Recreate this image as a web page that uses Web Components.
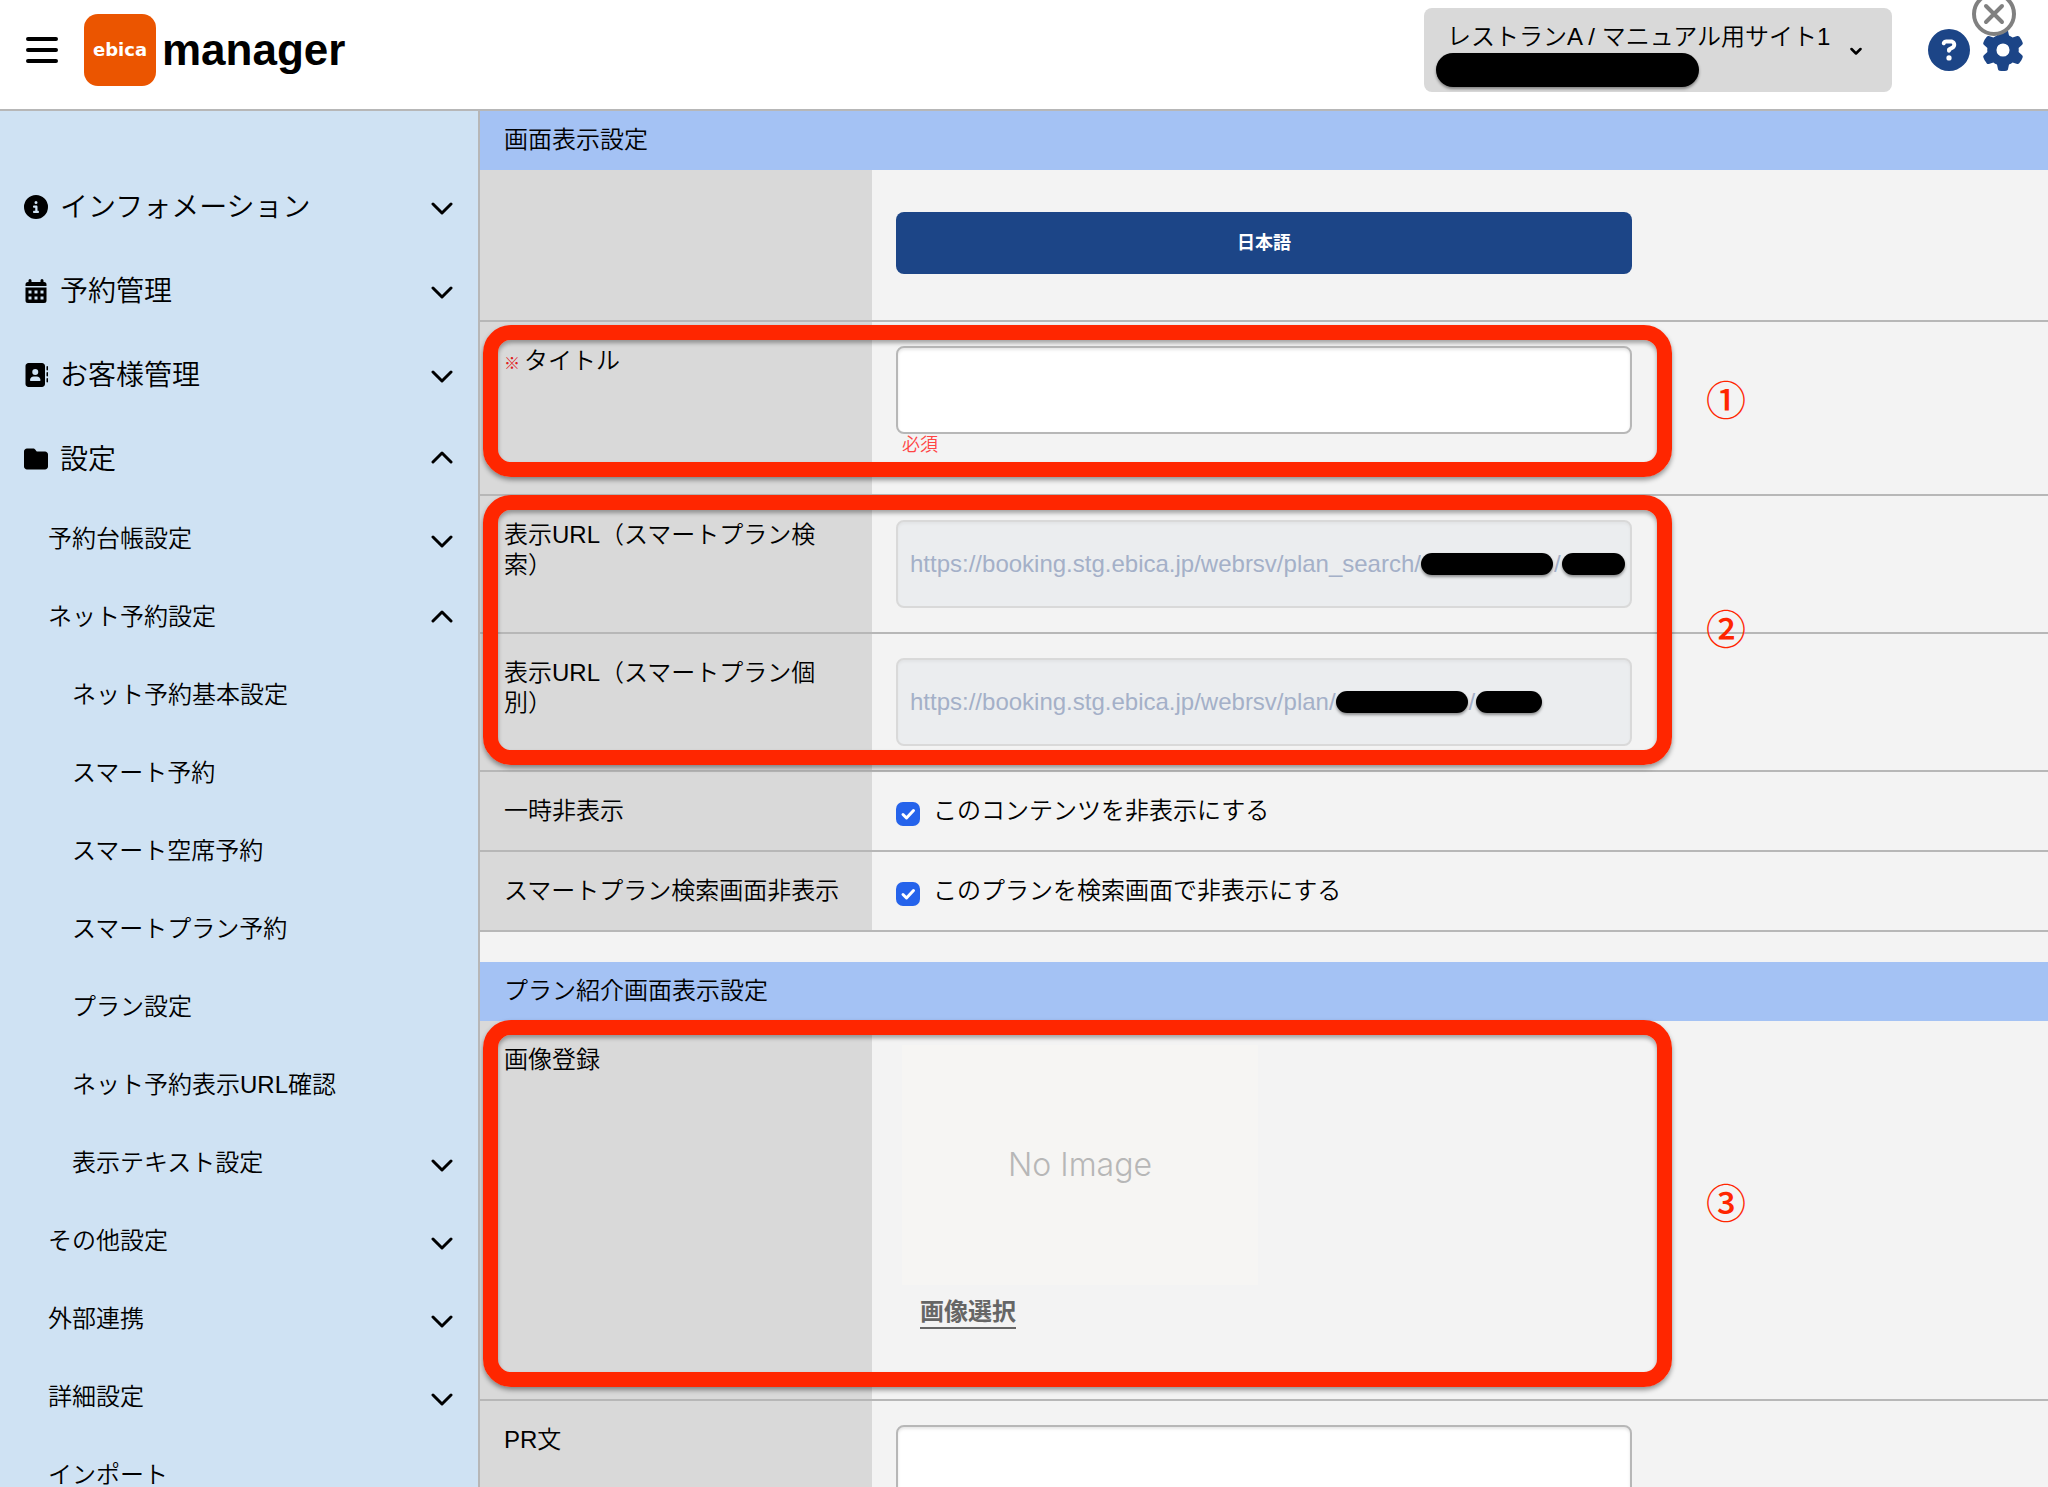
<!DOCTYPE html>
<html lang="ja">
<head>
<meta charset="utf-8">
<title>ebica manager</title>
<style>
  body {
    margin: 0;
    font: 350 24px/30px "Liberation Sans", "Noto Sans CJK JP", sans-serif;
    color: #000;
    background: #f3f3f3;
  }
</style>
</head>
<body>

<manager-app></manager-app>

<template id="app-template">
  <style>
    :host { display: flex; flex-direction: column; height: 100vh; overflow: hidden; }
    .body { display: flex; flex: 1; min-height: 0; }
    side-menu { flex: 0 0 478px; }
    settings-form { flex: 1; min-width: 0; }
  </style>
  <app-header></app-header>
  <div class="body">
    <side-menu></side-menu>
    <settings-form></settings-form>
  </div>
</template>

<template id="header-template">
  <style>
    :host {
      display: flex; align-items: flex-start; justify-content: space-between;
      height: 109px; border-bottom: 2px solid #b7b7b7; background: #fff;
    }
    button { border: 0; padding: 0; background: none; color: inherit; display: block; }
    .left { display: flex; align-items: center; padding: 14px 0 0 26px; }
    .brand { display: flex; align-items: center; gap: 6px; margin-left: 26px; color: #000; text-decoration: none; }
    .mark {
      display: flex; align-items: center; justify-content: center;
      width: 72px; height: 72px; border-radius: 14px; background: #eb5500;
      color: #fff; font: 700 18px/24px "DejaVu Sans", sans-serif;
    }
    .name { font-size: 44px; line-height: 72px; font-weight: 700; }
    .right { display: flex; align-items: center; padding: 8px 24px 0 0; }
    .site { position: relative; margin-right: 36px; }
    select {
      appearance: none; display: block; box-sizing: border-box; width: 468px; height: 84px;
      margin: 0; padding: 0 60px 26px 23px; border: 0; border-radius: 8px;
      background: #d9d9d9; color: #000; font: inherit;
    }
    .site app-icon { position: absolute; right: 30px; top: 37px; pointer-events: none; }
    .site black-pill { position: absolute; left: 12px; top: 45px; }
    .tools { display: flex; gap: 12px; color: #1c4587; }
    .close { position: absolute; top: -8px; right: 32px; color: #808080; }
  </style>
  <div class="left">
    <button aria-label="メニュー"><app-icon name="bars" style="--w:32px;--h:28px"></app-icon></button>
    <a class="brand" href="#"><span class="mark">ebica</span><span class="name">manager</span></a>
  </div>
  <div class="right">
    <div class="site">
      <select aria-label="サイト"><option>レストランA / マニュアル用サイト1</option></select>
      <black-pill style="--w:263px;--h:34px"></black-pill>
      <app-icon name="small-down" style="--w:12px;--h:12px"></app-icon>
    </div>
    <div class="tools">
      <button aria-label="ヘルプ"><app-icon name="help" style="--w:42px;--h:42px"></app-icon></button>
      <button aria-label="設定"><app-icon name="gear" style="--w:42px;--h:42px"></app-icon></button>
    </div>
  </div>
  <button class="close" aria-label="閉じる"><app-icon name="close" style="--w:44px;--h:44px"></app-icon></button>
</template>

<template id="menu-template">
  <style>
    :host {
      display: block; padding-top: 54px; overflow: hidden;
      background: #cfe2f3; border-right: 2px solid #b7b7b7;
    }
    nav { display: flex; flex-direction: column; }
  </style>
  <nav>
    <menu-item level="1" icon="info" arrow="down">インフォメーション</menu-item>
    <menu-item level="1" icon="calendar" arrow="down">予約管理</menu-item>
    <menu-item level="1" icon="book" arrow="down">お客様管理</menu-item>
    <menu-item level="1" icon="folder" arrow="up">設定</menu-item>
    <menu-item level="2" arrow="down">予約台帳設定</menu-item>
    <menu-item level="2" arrow="up">ネット予約設定</menu-item>
    <menu-item level="3">ネット予約基本設定</menu-item>
    <menu-item level="3">スマート予約</menu-item>
    <menu-item level="3">スマート空席予約</menu-item>
    <menu-item level="3">スマートプラン予約</menu-item>
    <menu-item level="3">プラン設定</menu-item>
    <menu-item level="3">ネット予約表示URL確認</menu-item>
    <menu-item level="3" arrow="down">表示テキスト設定</menu-item>
    <menu-item level="2" arrow="down">その他設定</menu-item>
    <menu-item level="2" arrow="down">外部連携</menu-item>
    <menu-item level="2" arrow="down">詳細設定</menu-item>
    <menu-item level="2">インポート</menu-item>
  </nav>
</template>

<template id="form-template">
  <style>
    :host { display: block; overflow: hidden; background: #f3f3f3; }
    form { margin: 0; }
    h2 {
      margin: 0; padding: 14px 24px 15px; background: #a4c2f4;
      font-size: 24px; line-height: 30px; font-weight: inherit;
    }
    h2.next { margin-top: 30px; }
    .group { position: relative; }
    .need { margin-right: 4px; color: #e02020; font-size: 16px; }
    .lang {
      display: block; width: 100%; height: 62px; margin: 18px 0 22px; border: 0; border-radius: 8px;
      background: #1c4587; color: #fff; font: 700 18px/24px "Liberation Sans", "Noto Sans CJK JP", sans-serif;
    }
    .field {
      display: flex; align-items: center; box-sizing: border-box; width: 100%; height: 88px; margin: 0;
      padding: 0 12px; border: 2px solid #b7b7b7; border-radius: 8px; background: #fff;
      box-shadow: inset 0 2px 3px #0000001a; font: inherit; color: #000; resize: none;
    }
    textarea.field { height: 180px; }
    .url {
      padding-right: 0; border-color: #d9d9d9; background: #ebedef; color: #a4b0c8;
      white-space: nowrap; box-shadow: inset 0 2px 3px #0000000a;
    }
    .url input {
      field-sizing: content; flex: none; padding: 0; border: 0; background: none;
      font: 400 24px/30px "Liberation Sans", sans-serif; color: inherit;
    }
    .url span { padding: 0 1px; font-weight: 400; }
    .error { margin: 0 0 14px; padding: 0 6px; line-height: 22px; font-size: 18px; color: #f44; }
    .check { display: flex; align-items: flex-end; gap: 13px; }
    .check input {
      appearance: none; width: 24px; height: 24px; margin: 0; border-radius: 7px; background: #2563eb;
    }
    .check input:checked {
      background: #2563eb url("data:image/svg+xml,%3Csvg xmlns='http://www.w3.org/2000/svg' viewBox='0 0 24 24'%3E%3Cpath d='M7 12.5l3.500 3.500 7-7.500' fill='none' stroke='white' stroke-width='3' stroke-linecap='round' stroke-linejoin='round'/%3E%3C/svg%3E");
    }
    .image {
      display: flex; align-items: center; justify-content: center;
      width: 356px; height: 240px; margin-left: 6px; background: #f6f5f3;
      color: #b7b7b7; font: 300 32px/40px Inter, Roboto, sans-serif;
    }
    .pick {
      display: inline-block; margin: 12px 24px 22px; border-bottom: 2px solid #666;
      color: #666; font-weight: 700; line-height: 30px; text-decoration: none;
    }
    .last { padding-bottom: 24px; }
  </style>
  <form>
    <h2>画面表示設定</h2>
    <setting-row>
      <button type="button" class="lang">日本語</button>
    </setting-row>
    <div class="group">
      <setting-row>
        <label slot="label" for="title"><span class="need">※</span>タイトル</label>
        <input id="title" class="field" type="text">
        <p class="error">必須</p>
      </setting-row>
      <call-out style="top:3px;bottom:19px">①</call-out>
    </div>
    <div class="group">
      <setting-row>
        <label slot="label" for="url-search">表示URL（スマートプラン検索）</label>
        <div class="field url">
          <input id="url-search" disabled value="https://booking.stg.ebica.jp/webrsv/plan_search/">
          <black-pill style="--w:132px;--h:22px"></black-pill><span>/</span>
          <black-pill style="--w:63px;--h:22px"></black-pill>
        </div>
      </setting-row>
      <setting-row>
        <label slot="label" for="url-plan">表示URL（スマートプラン個別）</label>
        <div class="field url">
          <input id="url-plan" disabled value="https://booking.stg.ebica.jp/webrsv/plan/">
          <black-pill style="--w:132px;--h:22px"></black-pill><span>/</span>
          <black-pill style="--w:66px;--h:22px"></black-pill>
        </div>
      </setting-row>
      <call-out style="top:-1px;bottom:7px">②</call-out>
    </div>
    <setting-row>
      <span slot="label">一時非表示</span>
      <div class="check"><input id="hide" type="checkbox" checked><label for="hide">このコンテンツを非表示にする</label></div>
    </setting-row>
    <setting-row>
      <span slot="label">スマートプラン検索画面非表示</span>
      <div class="check"><input id="hide-search" type="checkbox" checked><label for="hide-search">このプランを検索画面で非表示にする</label></div>
    </setting-row>

    <h2 class="next">プラン紹介画面表示設定</h2>
    <div class="group">
      <setting-row>
        <span slot="label">画像登録</span>
        <div class="last">
          <div class="image">No Image</div>
          <a class="pick" href="#">画像選択</a>
        </div>
      </setting-row>
      <call-out style="top:-1px;bottom:14px">③</call-out>
    </div>
    <setting-row>
      <label slot="label" for="pr">PR文</label>
      <textarea id="pr" class="field"></textarea>
    </setting-row>
  </form>
</template>

<script>
  // 아이콘 대신 쓰는 svg 목록
  const icons = {
    bars: ['0 0 32 28', '<path d="M2 3h28M2 14h28M2 25h28" fill="none" stroke="currentColor" stroke-width="4" stroke-linecap="round"/>'],
    down: ['0 0 22 16', '<path d="M2 5l9 9 9-9" fill="none" stroke="currentColor" stroke-width="3" stroke-linecap="round" stroke-linejoin="round"/>'],
    up: ['0 0 22 16', '<path d="M2 11l9-9 9 9" fill="none" stroke="currentColor" stroke-width="3" stroke-linecap="round" stroke-linejoin="round"/>'],
    'small-down': ['0 0 12 12', '<path d="M1.500 4L6 8.500 10.500 4" fill="none" stroke="currentColor" stroke-width="2.500" stroke-linecap="round" stroke-linejoin="round"/>'],
    close: ['0 0 44 44', '<circle cx="22" cy="22" r="20" fill="#fff" stroke="currentColor" stroke-width="4"/><path d="M14 14l16 16M30 14L14 30" stroke="currentColor" stroke-width="4" stroke-linecap="round"/>'],
    info: ['0 0 512 512', '<path fill="currentColor" d="M256 512A256 256 0 1 0 256 0a256 256 0 1 0 0 512zM216 336h24V272H216c-13.300 0-24-10.700-24-24s10.700-24 24-24h48c13.300 0 24 10.700 24 24v88h8c13.300 0 24 10.700 24 24s-10.700 24-24 24H216c-13.300 0-24-10.700-24-24s10.700-24 24-24zm40-208a32 32 0 1 1 0 64 32 32 0 1 1 0-64z"/>'],
    calendar: ['0 0 24 24', '<path fill="currentColor" fill-rule="evenodd" d="M6 0a1.500 1.500 0 0 1 1.500 1.500V3h9V1.500a1.500 1.500 0 0 1 3 0V3H20a2.500 2.500 0 0 1 2.500 2.500V7h-21V5.500A2.500 2.500 0 0 1 4 3h.5V1.500A1.500 1.500 0 0 1 6 0zM1.500 8.500h21v13A2.500 2.500 0 0 1 20 24H4a2.500 2.500 0 0 1-2.500-2.500zM4.500 11.500v3h3v-3zM10.500 11.500v3h3v-3zM16.500 11.500v3h3v-3zM4.500 17.500v3h3v-3zM10.500 17.500v3h3v-3zM16.500 17.500v3h3v-3z"/>'],
    book: ['0 0 512 512', '<path fill="currentColor" d="M96 0C60.700 0 32 28.700 32 64V448c0 35.300 28.700 64 64 64H384c35.300 0 64-28.700 64-64V64c0-35.300-28.700-64-64-64H96zM208 288h64c44.200 0 80 35.800 80 80c0 8.800-7.200 16-16 16H144c-8.800 0-16-7.200-16-16c0-44.200 35.800-80 80-80zm-32-96a64 64 0 1 1 128 0 64 64 0 1 1-128 0zM512 80c0-8.800-7.200-16-16-16s-16 7.200-16 16v64c0 8.800 7.200 16 16 16s16-7.200 16-16V80zM496 192c-8.800 0-16 7.200-16 16v64c0 8.800 7.200 16 16 16s16-7.200 16-16V208c0-8.800-7.200-16-16-16zm16 144c0-8.800-7.200-16-16-16s-16 7.200-16 16v64c0 8.800 7.200 16 16 16s16-7.200 16-16V336z"/>'],
    folder: ['0 0 512 512', '<path fill="currentColor" d="M64 480H448c35.300 0 64-28.700 64-64V160c0-35.300-28.700-64-64-64H288c-10.100 0-19.600-4.700-25.600-12.800L243.200 57.600C231.100 41.500 212.100 32 192 32H64C28.700 32 0 60.700 0 96V416c0 35.300 28.700 64 64 64z"/>'],
    help: ['0 0 512 512', '<path fill="currentColor" d="M256 512A256 256 0 1 0 256 0a256 256 0 1 0 0 512zM169.800 165.300c7.900-22.300 29.100-37.300 52.800-37.300h58.300c34.900 0 63.100 28.300 63.100 63.100c0 22.600-12.100 43.500-31.700 54.800L280 264.400c-.2 13-10.900 23.600-24 23.600c-13.300 0-24-10.700-24-24V250.500c0-8.600 4.600-16.500 12.100-20.800l44.300-25.400c4.700-2.700 7.600-7.700 7.600-13.100c0-8.400-6.800-15.100-15.100-15.100H222.600c-3.400 0-6.400 2.100-7.500 5.300l-.4 1.200c-4.400 12.500-18.200 19-30.600 14.600s-19-18.200-14.600-30.600l.4-1.200zM224 352a32 32 0 1 1 64 0 32 32 0 1 1-64 0z"/>'],
    gear: ['0 0 512 512', '<path fill="currentColor" d="M495.900 166.600c3.200 8.700 .5 18.400-6.400 24.600l-43.300 39.400c1.100 8.300 1.700 16.800 1.700 25.400s-.6 17.100-1.700 25.400l43.300 39.400c6.900 6.200 9.600 15.900 6.400 24.600c-4.400 11.900-9.700 23.300-15.800 34.300l-4.700 8.100c-6.600 11-14 21.400-22.100 31.200c-5.900 7.200-15.700 9.600-24.500 6.800l-55.700-17.700c-13.400 10.300-28.200 18.900-44 25.400l-12.500 57.100c-2 9.100-9 16.300-18.200 17.800c-13.800 2.300-28 3.500-42.500 3.500s-28.700-1.200-42.500-3.500c-9.200-1.500-16.200-8.700-18.200-17.800l-12.500-57.100c-15.800-6.500-30.600-15.100-44-25.400L83.100 425.900c-8.800 2.800-18.600 .3-24.500-6.800c-8.100-9.800-15.500-20.200-22.100-31.200l-4.700-8.100c-6.100-11-11.400-22.400-15.800-34.300c-3.200-8.700-.5-18.400 6.400-24.600l43.300-39.400C64.600 273.100 64 264.600 64 256s.6-17.100 1.700-25.400L22.400 191.200c-6.900-6.200-9.600-15.900-6.400-24.600c4.400-11.900 9.700-23.300 15.800-34.300l4.700-8.100c6.600-11 14-21.400 22.100-31.200c5.900-7.200 15.700-9.600 24.500-6.800l55.700 17.700c13.400-10.300 28.200-18.900 44-25.400l12.500-57.100c2-9.100 9-16.300 18.200-17.800C227.300 1.200 241.500 0 256 0s28.700 1.200 42.500 3.500c9.200 1.500 16.200 8.700 18.200 17.800l12.500 57.100c15.800 6.500 30.600 15.100 44 25.400l55.700-17.700c8.800-2.800 18.600-.3 24.500 6.800c8.100 9.800 15.500 20.200 22.100 31.200l4.700 8.100c6.100 11 11.400 22.400 15.800 34.300zM256 336a80 80 0 1 0 0-160 80 80 0 1 0 0 160z"/>']
  };

  class AppIcon extends HTMLElement {
    connectedCallback() {
      const [box, shape] = icons[this.getAttribute('name')];
      this.attachShadow({mode: 'open'});
      this.shadowRoot.innerHTML = `
        <style>
          :host { display: block; flex: none; width: var(--w); height: var(--h); }
          svg { display: block; width: 100%; height: 100%; }
        </style>
        <svg viewBox="${box}" aria-hidden="true">${shape}</svg>`;
    }
  }

  // 가림막
  class BlackPill extends HTMLElement {
    connectedCallback() {
      this.attachShadow({mode: 'open'});
      this.shadowRoot.innerHTML = `
        <style>
          :host {
            display: block; flex: none; width: var(--w); height: var(--h);
            border-radius: 17px; background: #000; box-shadow: 0 2px 3px #0006;
          }
        </style>`;
    }
  }

  class MenuItem extends HTMLElement {
    connectedCallback() {
      const icon = this.getAttribute('icon');
      const arrow = this.getAttribute('arrow');
      const tag = arrow ? 'button' : 'a href="#"';
      this.attachShadow({mode: 'open'});
      this.shadowRoot.innerHTML = `
        <style>
          :host { display: block; }
          .item {
            display: flex; align-items: center; box-sizing: border-box; width: 100%; height: 78px;
            margin: 0; padding: 0 25px 0 48px; border: 0; background: none;
            font: inherit; color: #000; text-align: left; text-decoration: none;
          }
          .text { flex: 1; padding-bottom: 2px; }
          :host([level="1"]) .item { height: 84px; padding-left: 24px; gap: 12px; font-size: 28px; }
          :host([level="1"]) .text { padding: 2px 0 0; }
          :host([level="3"]) .item { padding-left: 72px; }
        </style>
        <${tag} class="item">
          ${icon ? `<app-icon name="${icon}" style="--w:24px;--h:24px"></app-icon>` : ''}
          <span class="text"><slot></slot></span>
          ${arrow ? `<app-icon name="${arrow}" style="--w:22px;--h:16px"></app-icon>` : ''}
        </${arrow ? 'button' : 'a'}>`;
    }
  }

  class SettingRow extends HTMLElement {
    connectedCallback() {
      this.attachShadow({mode: 'open'});
      this.shadowRoot.innerHTML = `
        <style>
          :host { display: flex; border-bottom: 2px solid #b7b7b7; }
          .label { flex: 0 0 392px; box-sizing: border-box; padding: 24px; background: #d9d9d9; }
          .value { flex: 1; min-width: 0; padding: 24px; }
          .inner { max-width: 736px; }
        </style>
        <div class="label"><slot name="label"></slot></div>
        <div class="value"><div class="inner"><slot></slot></div></div>`;
    }
  }

  // 빨간 테두리 + 번호
  class CallOut extends HTMLElement {
    connectedCallback() {
      this.attachShadow({mode: 'open'});
      this.shadowRoot.innerHTML = `
        <style>
          :host {
            position: absolute; left: 3px; z-index: 1; display: flex; align-items: center; gap: 34px;
            pointer-events: none; color: #ff2600; font-size: 40px; line-height: 48px; font-weight: 500;
            font-family: "Noto Sans CJK JP", sans-serif;
          }
          .box {
            align-self: stretch; box-sizing: border-box; width: 1189px;
            border: 15px solid #ff2600; border-radius: 28px;
            box-shadow: 0 3px 5px #0006, inset 0 3px 4px #0005;
          }
          .num { padding-bottom: 6px; }
        </style>
        <div class="box"></div><span class="num"><slot></slot></span>`;
    }
  }

  function fromTemplate(name, id) {
    customElements.define(name, class extends HTMLElement {
      connectedCallback() {
        this.attachShadow({mode: 'open'});
        this.shadowRoot.append(document.getElementById(id).content.cloneNode(true));
      }
    });
  }

  customElements.define('app-icon', AppIcon);
  customElements.define('black-pill', BlackPill);
  customElements.define('menu-item', MenuItem);
  customElements.define('setting-row', SettingRow);
  customElements.define('call-out', CallOut);
  fromTemplate('app-header', 'header-template');
  fromTemplate('side-menu', 'menu-template');
  fromTemplate('settings-form', 'form-template');
  fromTemplate('manager-app', 'app-template');
</script>
</body>
</html>
